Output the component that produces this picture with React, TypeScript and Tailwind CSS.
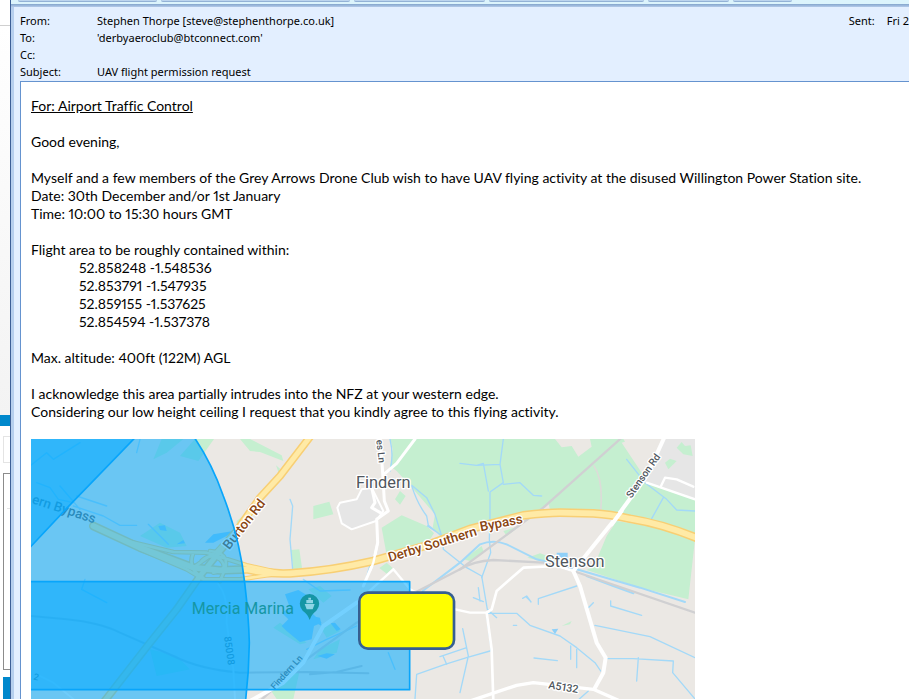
import React from 'react'

const headers = [
  { label: 'From:', value: 'Stephen Thorpe [steve@stephenthorpe.co.uk]' },
  { label: 'To:', value: "'derbyaeroclub@btconnect.com'" },
  { label: 'Cc:', value: '' },
  { label: 'Subject:', value: 'UAV flight permission request' },
]

const corners = ['52.858248 -1.548536', '52.853791 -1.547935', '52.859155 -1.537625', '52.854594 -1.537378']

const PageBehind = () => {
  return (
    <div className="flex flex-col w-[10px] shrink-0 bg-white overflow-hidden">
      <div className="h-[26px] border-b border-[#d0d0d0] bg-white" />
      <div className="h-[389px] bg-linear-to-b from-white to-[#f3f3f3]" />
      <div className="h-[11px] bg-[#0088cc]" />
      <div className="mt-[10px] ml-[3px] h-[27px] border border-r-0 border-[#e4e4e4]" />
      <div className="mt-[10px] ml-[3px] h-[197px] border border-r-0 border-[#8c8c8c]">
        <div className="mt-[34px] ml-[3px] h-px bg-[#e4e4e4]" />
      </div>
      <div className="mt-[7px] ml-[3px] grow bg-[#0088cc]" />
    </div>
  )
}

const Ribbon = () => {
  return (
    <div>
      <div className="flex gap-1 h-[4px] pl-[7px] items-start bg-[#dcf4fc]">
        <div className="h-[2px] w-[139px] rounded-b-xs bg-[#bdd5ee] border-b border-[#93b2d6]" />
        <div className="h-[2px] w-[189px] rounded-b-xs bg-[#bdd5ee] border-b border-[#93b2d6]" />
        <div className="h-[2px] w-[131px] rounded-b-xs bg-[#bdd5ee] border-b border-[#93b2d6]" />
        <div className="h-[2px] w-[155px] rounded-b-xs bg-[#bdd5ee] border-b border-[#93b2d6]" />
        <div className="h-[2px] w-[81px] rounded-b-xs bg-[#bdd5ee] border-b border-[#93b2d6]" />
        <div className="h-[2px] w-[59px] rounded-b-xs bg-[#bdd5ee] border-b border-[#93b2d6]" />
      </div>
      <div className="h-[3px] bg-linear-to-b from-[#84a5cc] to-[#b4cbea]" />
    </div>
  )
}

const bypass = 'M-440 270 L-300 335 L-140 395 L-60 403 L20 400 Q90 415 150 412 Q270 405 400 375 L560 328 L690 279 L850 238 Q920 230 960 230 L1060 232 Q1110 235 1170 248 Q1270 264 1380 310'
const burtonRoad = 'M212 0 L120 120 L60 185 L-10 285 L-60 345 L-120 420 L-190 520 L-270 620 L-410 800'
const railway = 'M1145 5 L910 215 L660 400 L350 560 L200 670 L60 795'
const branchLine = 'M660 400 Q700 375 760 372 L910 380 L1000 405 L1365 530'
const slipRoads =
  'M-360 310 L-200 348 L-100 350 L20 388 L120 410 M-300 340 L-160 400 L-110 430 L0 430 L120 412 M-140 350 Q-160 400 -110 425 M-90 345 Q-30 350 -45 400 L-60 435 M-115 375 Q-90 350 -60 370 Q-30 400 -80 410 M-140 395 L-70 345 L-20 290'

// everything below is in the coordinates of the middle tile
const AreaMap = () => {
  return (
    <svg viewBox="0 0 1992 780" className="block w-[664px] max-w-full font-[Roboto,sans-serif]" fill="none" strokeLinecap="round" strokeLinejoin="round">
      <rect width="1992" height="780" fill="#ebe8e4" />
      <g transform="translate(627 -9)">
        {/* parks and fields */}
        <g fill="#c5efd0">
          <path d="M450 0 H1145 L1220 130 L1365 185 V310 L1270 264 L1170 243 L1060 228 L950 225 L850 235 L690 272 L650 285 L600 300 L578 275 L585 235 L520 160 L470 105 L450 90 L458 40 Z" />
          <path d="M1100 300 L1130 255 L1260 275 L1365 310 L1345 490 L1200 455 L1040 402 L1062 390 Z" />
          <path d="M425 275 L485 238 L560 270 L582 292 L560 325 L440 358 Z" />
          <path d="M220 210 L268 197 L280 235 L220 250 Z" />
          <path d="M152 342 L178 340 L186 395 L160 402 Z" />
          <path d="M0 9 H30 L125 58 L130 75 L60 48 L30 45 Z" />
          <path d="M465 190 L480 165 L497 180 L480 206 Z" />
          <path d="M418 396 L440 380 L458 396 L440 413 Z" />
          <path d="M790 285 L840 270 L800 300 Z" />
          <path d="M670 370 L725 330 L732 350 L690 375 Z" />
          <path d="M862 365 L900 352 L950 370 L940 385 Z" />
          <path d="M965 570 L995 555 L990 565 Z" />
          <path d="M108 88 L120 98 L116 110 Z" />
          <path d="M-135 9 H-78 L-125 75 L-180 60 Z" />
          <path d="M-235 9 H-170 L-220 50 L-260 70 Z" />
          <path d="M-10 255 L40 215 L30 235 L-10 270 Z" />
          <path d="M-300 300 L-240 260 L-180 290 L-160 330 L-220 335 Z" />
          <path d="M245 580 L280 560 L300 585 L260 605 Z M240 640 L300 610 L290 650 L220 670 Z" />
          <path d="M100 575 L120 560 L200 620 L180 625 Z M205 460 L240 450 L275 480 L250 500 Z" />
          <path d="M-270 640 L-190 660 L-150 700 L-250 720 Z M90 760 L180 700 L160 789 H110 Z" />
        </g>
        <path d="M945 9 H1050 L1055 32 L1015 62 L995 30 L965 34 Z M1145 20 L1180 9 H1270 L1215 125 Z M900 222 L925 200 L930 222 Z" fill="#ebe8e4" />
        <path d="M1270 9 H1365 V190 L1212 140 Z" fill="#e6e6e6" />
        <path d="M1310 35 L1325 18 L1335 30 L1352 28 L1358 60 L1330 55 Z M1275 80 L1290 68 L1310 75 L1285 100 Z" fill="#c5efd0" />

        {/* village outline */}
        <path d="M292 215 L300 200 L350 190 L365 160 L395 155 L430 225 L408 255 L335 280 L305 262 Z" fill="#e6e6e6" stroke="#fff" strokeWidth="6" />

        {/* streams and canal */}
        <g stroke="#a3d9f8" strokeWidth="4">
          <path d="M450 9 Q462 60 450 105 M515 148 Q530 200 560 240 L565 268 L605 300 L585 235 L560 185 L515 148 M562 270 L608 300 L610 340 L680 395 L725 420 L742 520 L770 545" />
          <path d="M790 9 L780 85 L790 140 L750 168 L750 240 L748 310 L752 350 L725 425 M660 82 L710 88 L730 82 L745 165 M780 85 L710 88 M790 145 L840 140 L880 178 L905 180" />
          <path d="M150 190 L158 210 L150 310 L158 400 M190 430 L240 465 L330 462 M375 440 L395 370" />
          <path d="M548 465 L660 380 L720 325 Q760 310 800 325 L890 370 L1010 400 L1200 455 L1335 498 M1040 420 L1120 450 L1180 472" strokeWidth="6" />
          <path d="M1160 70 L1215 140 L1280 190 L1310 222 L1365 225 M1270 185 L1235 248" />
          <path d="M742 532 L830 532 L870 568 L960 600 L1010 635 L1065 680 L1082 705" />
          <path d="M895 505 L895 488 L1010 450 M848 487 L860 480 L873 498 M858 482 L868 492 M1112 495 V510 L1205 538 M1065 568 L1230 602 L1365 665 M1100 668 H1180 L1300 675 L1298 710 L1365 789 M1195 665 L1190 735 M992 630 V670 M1010 640 V695 M882 666 L952 674 M820 568 H830" />
          <path d="M525 789 L530 715 L615 685 L680 665 L750 645 M600 662 L680 635 M610 662 L620 685 M668 578 L685 660 L660 770 M700 485 L730 497 M715 455 L720 495 M740 535 L755 650" />
          <path d="M445 650 L465 700 M200 640 L260 610 L350 570 M1018 789 L1045 765 M1045 515 L1060 500" />
          <path d="M-610 140 L-570 155 L-545 190 L-500 200 M-490 180 L-400 210 M-500 210 L-410 240 L-360 268 L-310 268 M-540 150 L-480 220 M-275 265 L-215 325 M-465 430 L-475 460 L-400 500 M-630 90 L-580 50 L-560 70 L-480 20 M-310 50 L-300 10" />
        </g>
        <g fill="#8fd0f8">
          <path d="M135 475 L175 462 L205 480 L205 520 L245 560 L222 570 L215 610 L180 618 L140 585 L125 570 L145 550 L125 530 L150 515 Z" />
          <path d="M215 540 L240 545 L245 570 L228 560 Z M272 562 L285 560 L302 580 L290 585 Z M232 660 L260 652 L285 655 L260 668 Z" />
          <path d="M950 350 H983 V368 H950 Z M935 580 L955 578 L945 594 Z" />
          <path d="M-105 320 L-80 295 L-20 285 L-40 300 L-80 320 Z M-245 270 L-225 268 L-220 285 L-240 282 Z M-190 325 L-170 312 L-165 322 Z" />
        </g>

        {/* railways and power line */}
        <path d={railway} stroke="#d0d0d2" strokeWidth="7" />
        <path d={branchLine} stroke="#d0d0d2" strokeWidth="7" />
        <path d="M1062 90 Q1090 130 1082 225" stroke="#dcdcd8" strokeWidth="5" />
        <path d="M-627 540 L-520 550 Q-420 560 -360 590 L-200 660 Q-120 700 0 710 L200 708 L385 712 M210 715 L290 708 L365 690" stroke="#c8c8ca" strokeWidth="6" />

        {/* local roads */}
        <g stroke="#fff">
          <path d="M420 0 L428 110 L433 195 L445 225 L410 250 L413 320 L400 380 L370 450 M395 155 L405 200 L395 215 L430 235 M525 9 L470 82 L435 112" strokeWidth="9" />
          <path d="M350 500 L250 570 L190 680 L130 740 L30 795" strokeWidth="12" />
          <path d="M460 400 L350 500 M460 400 L510 460 L600 510 L690 530 H740" strokeWidth="7" />
          <path d="M1275 0 L1220 120 L1130 243 L1060 330 L1000 405 L1020 450 L1070 620 L1097 665 L1090 710 L1065 755" strokeWidth="12" />
          <path d="M1000 405 L950 390 L850 395 L770 465 L755 520 L740 530 L755 640 L760 795" strokeWidth="8" />
          <path d="M690 795 L830 748 L880 740 L1060 760 L1140 795" strokeWidth="10" />
          <path d="M1220 140 L1365 190 M1262 152 L1275 125 L1310 130 L1360 152" strokeWidth="7" />
        </g>
        <path d="M-65 445 Q-35 480 -40 560 L-20 700 L-15 789 M-600 720 L-560 740 L-500 789" stroke="#f6f5f4" strokeWidth="6" />

        {/* main roads */}
        <g stroke="#f8cf74">
          <path d={slipRoads} strokeWidth="14" />
          <path d={burtonRoad} strokeWidth="24" />
          <path d={bypass} strokeWidth="26" />
        </g>
        <g stroke="#ffeaa6">
          <path d={slipRoads} strokeWidth="8" />
          <path d={burtonRoad} strokeWidth="15" />
          <path d={bypass} strokeWidth="17" />
        </g>
        <path d="M413 320 L400 380 L390 405" stroke="#fff" strokeWidth="7" />
        <path d="M1145 225 L1115 265" stroke="#fff" strokeWidth="12" />

        {/* labels */}
        <g fill="#4f565d" stroke="#fff" strokeWidth="8" paintOrder="stroke">
          <text x="348" y="155" fontSize="49">Findern</text>
          <text x="915" y="393" fontSize="49">Stenson</text>
          <text transform="translate(409 12) rotate(84)" fontSize="29" fontWeight="500">es Ln</text>
          <text transform="translate(1174 188) rotate(-55)" fontSize="30" fontWeight="500">Stenson Rd</text>
          <text transform="translate(924 757) rotate(9)" fontSize="32" fontWeight="500">A5132</text>
        </g>
        <g fill="#5d666b" fontWeight="500">
          <text transform="translate(-626 201) rotate(18)" fontSize="40">ern Bypass</text>
          <text transform="translate(104 762) rotate(-48)" fontSize="27">Findern Ln</text>
          <text transform="translate(-48 602) rotate(82)" fontSize="30">85008</text>
          <text transform="translate(-621 730) rotate(15)" fontSize="27">2</text>
        </g>
        <g fill="#8a4510" stroke="#fff" strokeWidth="8" paintOrder="stroke" fontWeight="500">
          <text transform="translate(-32 343) rotate(-52)" fontSize="40">Burton Rd</text>
          <text transform="translate(449 378) rotate(-17)" fontSize="40">Derby Southern</text>
          <text transform="translate(722 286) rotate(-11)" fontSize="40">Bypass</text>
        </g>

        {/* restricted zones */}
        <g fill="#00aaff" fillOpacity="0.55" stroke="#08a5fb" strokeWidth="5">
          <path d="M-640 0 H-140 Q-85 80 -50 180 Q0 310 14 440 Q26 540 28 620 Q27 710 16 800 H-640 Z" />
          <path d="M-640 0 H-310 L-518 215 L-640 345 Z" />
          <rect x="-640" y="437" width="1149" height="324" />
        </g>

        <g fill="#1596a5">
          <text x="-145" y="535" fontSize="48">Mercia Marina</text>
          <path d="M209 552 Q204 535 188 524 A29 29 0 1 1 229 524 Q214 535 209 552 Z" />
        </g>
        <path d="M194 504 H224 L218 520 H200 Z M199 492 H219 V502 H199 Z M205 485 H213 V491 H205 Z" fill="#8fd5e6" />

        {/* flight area */}
        <rect x="358" y="470" width="284" height="168" rx="26" fill="#ff0" stroke="#365f91" strokeWidth="8" />
      </g>
    </svg>
  )
}

const App = () => {
  return (
    <div className="flex min-h-screen overflow-hidden bg-white text-black">
      <PageBehind />
      <div className="flex flex-col grow min-w-0 border-l border-[#3c5f97] bg-[#e3efff]">
        <Ribbon />
        <div className="flex grow min-w-0">
          <div className="w-[3px] bg-[#b6cfee]" />
          <div className="flex flex-col grow min-w-0 pl-[6px]">
            <div className="flex justify-between pt-[5px] h-[74px] font-['Noto_Sans',sans-serif] text-[11px] leading-[17px] whitespace-nowrap">
              <dl>
                {headers.map((h) => (
                  <div key={h.label} className="flex">
                    <dt className="w-[77px]">{h.label}</dt>
                    <dd>{h.value}</dd>
                  </div>
                ))}
              </dl>
              <div className="flex gap-3">
                <span>Sent:</span>
                <span>Fri 2</span>
              </div>
            </div>
            <div className="grow border-t border-l border-[#6593cf] bg-white pt-[15px] pl-[10px] font-[Lato,sans-serif] text-[14px] leading-[18px] proportional-nums [font-variant-ligatures:none]">
              <p className="underline">For: Airport Traffic Control</p>
              <p className="mt-[18px]">Good evening,</p>
              <p className="mt-[18px]">Myself and a few members of the Grey Arrows Drone Club wish to have UAV flying activity at the disused Willington Power Station site.</p>
              <p>Date: 30th December and/or 1st January</p>
              <p>Time: 10:00 to 15:30 hours GMT</p>
              <p className="mt-[18px]">Flight area to be roughly contained within:</p>
              <ul className="pl-12">
                {corners.map((c) => (
                  <li key={c}>{c}</li>
                ))}
              </ul>
              <p className="mt-[18px]">Max. altitude: 400ft (122M) AGL</p>
              <p className="mt-[18px]">I acknowledge this area partially intrudes into the NFZ at your western edge.</p>
              <p className="mb-[18px]">Considering our low height ceiling I request that you kindly agree to this flying activity.</p>
              <AreaMap />
            </div>
          </div>
        </div>
      </div>
    </div>
  )
}

export default App
